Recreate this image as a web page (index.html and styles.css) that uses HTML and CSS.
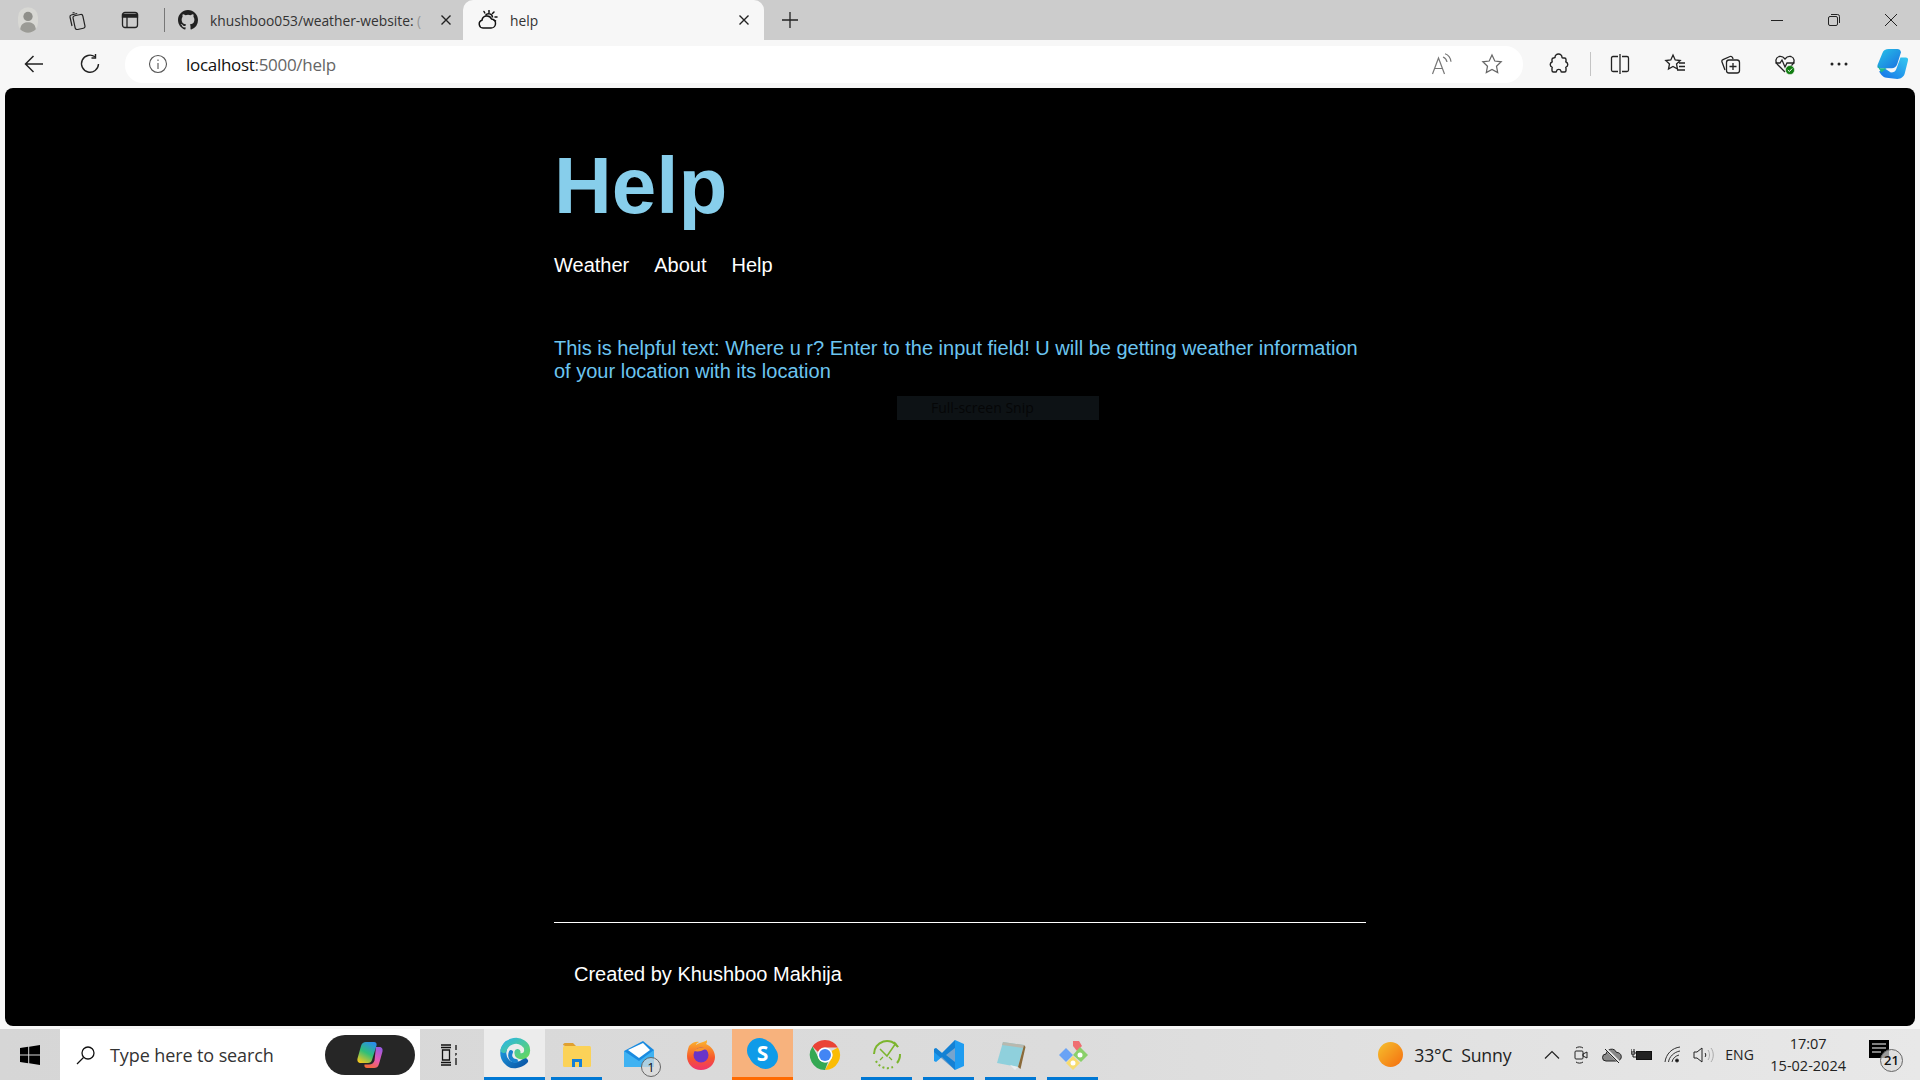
FILE: index.html
```html
<!DOCTYPE html>
<html lang="en">
<head>
  <meta charset="UTF-8">
  <title>help</title>
  <link rel="stylesheet" href="styles.css">
</head>
<body>
  <div class="tabstrip">
    <svg class="avatar" viewBox="0 0 28 36"><rect width="28" height="36" rx="14" fill="#d8d8d4"/><circle cx="14" cy="13" r="6.5" fill="#8f8f8a"/><path d="M3 31c1-8 6-10 11-10s10 2 11 10c-3 3-7 5-11 5s-8-2-11-5z" fill="#9b9b96"/></svg>
    <svg class="tico collections" viewBox="0 0 20 20" fill="none" stroke="#222" stroke-width="1.2"><rect x="7" y="5" width="10" height="14" rx="2" transform="rotate(-12 12 12)"/><path d="M5 16 3 7c-.2-1 .3-1.800 1.200-2l6-1.500M7.500 2.500l-2 .5"/></svg>
    <svg class="tico sidebar" viewBox="0 0 20 20" fill="none" stroke="#222" stroke-width="1.300"><rect x="2.500" y="2.500" width="15" height="15" rx="2.500"/><path d="M2.500 4.500h15v2.500h-15z" fill="#222"/><path d="M7 7v10"/></svg>
    <span class="tabsep"></span>
    <div class="tab">
      <svg class="favicon" viewBox="0 0 16 16"><path fill="#222" d="M8 0C3.580 0 0 3.580 0 8c0 3.540 2.290 6.530 5.470 7.590.4.070.55-.17.55-.38v-1.340c-2.230.49-2.690-1.070-2.690-1.070-.36-.93-.89-1.170-.89-1.170-.73-.5.060-.49.060-.49.800.06 1.220.820 1.220.820.720 1.220 1.870.87 2.330.66.070-.52.280-.87.510-1.070-1.780-.2-3.640-.89-3.640-3.950 0-.87.31-1.590.820-2.150-.08-.2-.36-1.020.08-2.120 0 0 .67-.21 2.200.820a7.700 7.700 0 0 1 4 0c1.530-1.040 2.200-.82 2.200-.82.44 1.100.16 1.920.08 2.120.51.560.82 1.270.82 2.150 0 3.070-1.870 3.750-3.650 3.950.29.250.54.730.54 1.480v2.200c0 .21.15.46.55.38A8 8 0 0 0 16 8c0-4.420-3.580-8-8-8z"/></svg>
      <span class="tabtitle">khushboo053/weather-website: <span class="fade">(</span></span>
      <svg class="tabx" viewBox="0 0 12 12" stroke="#222" stroke-width="1.400"><path d="M1.500 1.500l9 9M10.500 1.500l-9 9"/></svg>
    </div>
    <div class="tab active">
      <svg class="favicon" viewBox="0 0 20 20" fill="none" stroke="#111" stroke-width="1.500"><path d="M5 18a4 4 0 0 1-1-7.800A5 5 0 0 1 13.500 9a4.500 4.500 0 0 1-1 9z"/><path d="M7.500 5.500A3.800 3.800 0 0 1 14.500 7.500"/><path d="M11 .5v2M16 2l-1.500 1.500M19 7h-2M17.500 11l-1.500-.8M6 1.500l.8 1.500" stroke-linecap="round"/></svg>
      <span class="tabtitle">help</span>
      <svg class="tabx" viewBox="0 0 12 12" stroke="#222" stroke-width="1.400"><path d="M1.500 1.500l9 9M10.500 1.500l-9 9"/></svg>
    </div>
    <svg class="newtab" viewBox="0 0 18 18" stroke="#222" stroke-width="1.300"><path d="M9 1v16M1 9h16"/></svg>
    <div class="winctl">
      <svg viewBox="0 0 14 14" stroke="#222"><path d="M1 7.500h12"/></svg>
      <svg viewBox="0 0 14 14" fill="none" stroke="#222"><rect x="1.500" y="3.500" width="9" height="9" rx="1.500"/><path d="M4 1.500h6.500a2 2 0 0 1 2 2V10"/></svg>
      <svg viewBox="0 0 14 14" stroke="#222"><path d="M1 1l12 12M13 1 1 13"/></svg>
    </div>
  </div>

  <div class="toolbar">
    <svg class="tool back" viewBox="0 0 22 22" fill="none" stroke="#222" stroke-width="1.500"><path d="M20 11H2.500M10.500 3l-8 8 8 8"/></svg>
    <svg class="tool reload" viewBox="0 0 22 22" fill="none" stroke="#222" stroke-width="1.400"><path d="M16 3.800A8.500 8.500 0 1 0 19.500 11"/><path d="M16.500 1v4h-4"/></svg>
    <div class="addressbar">
      <svg class="info" viewBox="0 0 20 20" fill="none" stroke="#555" stroke-width="1.100"><circle cx="10" cy="10" r="8.500"/><path d="M10 9v6M10 5.500v1.500"/></svg>
      <span class="url">localhost<span class="urlrest">:5000/help</span></span>
      <svg class="readaloud" viewBox="0 0 22 22" fill="none" stroke="#777" stroke-width="1.200"><path d="M1.500 21 7.500 5l6 16M3.800 15.500h7.500M12 4c2 .8 3.500 2.500 4 5M14 .8c3 1 5.500 4 6 8"/></svg>
      <svg class="staricon" viewBox="0 0 22 22" fill="none" stroke="#666" stroke-width="1.200"><path d="M11 2l2.800 6 6.400.8-4.700 4.400 1.200 6.400-5.700-3.200-5.700 3.200 1.200-6.400L1.800 8.800 8.200 8z"/></svg>
    </div>
    <svg class="tool puzzle" viewBox="0 0 22 22" fill="none" stroke="#222" stroke-width="1.400"><path d="M7 4.500a3.500 3.500 0 0 1 7 0c0 .5 1 .5 1.500.5h1c1 0 1.500.7 1.500 1.500V8c0 .5-.5 1 0 1a2.800 2.800 0 0 1 0 5.200c-.5 0 0 .5 0 1v2.300c0 1-.7 1.500-1.500 1.500H14c-.5 0-1-.3-1-.8a2.300 2.300 0 0 0-4.500 0c0 .5-.5.800-1 .8H5.500C4.500 19 4 18.300 4 17.500v-2.300c0-.5.5-1 0-1a2.800 2.800 0 0 1 0-5.200c.5 0 0-.5 0-1V6.500C4 5.500 4.700 5 5.500 5z"/></svg>
    <span class="toolsep"></span>
    <svg class="tool split" viewBox="0 0 22 22" fill="none" stroke="#222" stroke-width="1.300"><path d="M9 3.500H4C3 3.500 2.500 4 2.500 5v12c0 1 .5 1.500 1.500 1.500h5M13 3.500h5c1 0 1.500.5 1.500 1.500v12c0 1-.5 1.500-1.500 1.500h-5M11 1v20"/></svg>
    <svg class="tool favs" viewBox="0 0 22 22" fill="none" stroke="#222" stroke-width="1.300"><path d="M9 2l2.200 5 5 .6-3.700 3.400 1 5-4.500-2.500L4.500 16l1-5-3.700-3.400 5-.6zM15 10h6M15 13.500h6M13 17h8"/></svg>
    <svg class="tool colls" viewBox="0 0 22 22" fill="none" stroke="#222" stroke-width="1.300"><rect x="7.500" y="7" width="13" height="13" rx="2.500"/><path d="M14 10v7M10.500 13.500h7M6 17 3 9c-.4-1 0-2 1-2.400L11 3.500c1-.4 2 0 2.500 1l.6 1.500"/></svg>
    <svg class="tool health" viewBox="0 0 22 22" fill="none" stroke="#222" stroke-width="1.300"><path d="M11 19 3.500 11.500C1 9 1.500 4.500 5 3.500c2.500-.6 4.500.5 6 2.500 1.500-2 3.500-3.100 6-2.500 3.500 1 4 5.500 1.500 8l-2 2"/><path d="M1.500 10H6l2-3 3 7 2-4h7.500"/><circle cx="16" cy="17" r="4.500" fill="#107c10" stroke="#fff" stroke-width=".5"/><path d="M13.800 17l1.600 1.500 2.800-3" stroke="#fff" stroke-width="1"/></svg>
    <svg class="tool dots" viewBox="0 0 22 22" fill="#222"><circle cx="4" cy="11" r="1.500"/><circle cx="11" cy="11" r="1.500"/><circle cx="18" cy="11" r="1.500"/></svg>
    <svg class="tool copilot" viewBox="0 0 30 30">
      <defs>
        <linearGradient id="cpa" x1="0" y1="0" x2="1" y2="1"><stop offset="0" stop-color="#27c4e8"/><stop offset="1" stop-color="#1a6fe0"/></linearGradient>
        <linearGradient id="cpb" x1="0" y1="1" x2="1" y2="0"><stop offset="0" stop-color="#1570e8"/><stop offset="1" stop-color="#35c8f0"/></linearGradient>
      </defs>
      <path d="M11 1h8c2 0 3 1 3.500 3L19 15c-1 3-3 4-5 4H2c-1.500 0-2-1-1.500-3L5 5c1-3 3-4 6-4z" fill="url(#cpa)"/>
      <path d="M7 19 2 22c2 3 3 5 7 6l10 1c4 0 6-2 7-5l3-12c.5-2-.5-3-2-3h-5l-4 11c-1 2-2 3-5 3z" fill="url(#cpb)"/>
      <path d="M1 16c0 3 2 5 3 7l5-4H3z" fill="#1fb98d"/>
    </svg>
  </div>

  <main class="page">
    <div class="main-content">
      <h1>Help</h1>
      <nav class="nav">
        <a href="#">Weather</a>
        <a href="#">About</a>
        <a href="#">Help</a>
      </nav>
      <p class="helptext">This is helpful text: Where u r? Enter to the input field! U will be getting weather information of your location with its location</p>
      <footer class="footer">Created by Khushboo Makhija</footer>
    </div>
    <div class="snip-hint">Full-screen Snip</div>
  </main>

  <div class="taskbar">
    <div class="startbtn">
      <svg viewBox="0 0 20 20" fill="#000"><path d="M0 3l8.200-1.200v7.700H0zM9.200 1.700 20 0v9.500H9.200zM0 10.500h8.200v7.700L0 17zM9.200 10.500H20V20L9.200 18.300z"/></svg>
    </div>
    <div class="searchbox">
      <svg class="searchicon" viewBox="0 0 20 20" fill="none" stroke="#111" stroke-width="1.300"><circle cx="12" cy="8" r="6"/><path d="M7.500 12.500 1 19"/></svg>
      <span class="searchtext">Type here to search</span>
      <div class="copilotpill">
        <svg viewBox="0 0 26 28">
          <defs>
            <linearGradient id="pa" x1=".7" y1="0" x2=".2" y2="1"><stop offset="0" stop-color="#2a8fe8"/><stop offset=".5" stop-color="#2fbf78"/><stop offset="1" stop-color="#f5c81e"/></linearGradient>
            <linearGradient id="pb" x1=".7" y1="0" x2=".3" y2="1"><stop offset="0" stop-color="#9a5ae0"/><stop offset=".55" stop-color="#e85ab0"/><stop offset="1" stop-color="#f4693a"/></linearGradient>
          </defs>
          <path d="M9 1h8c2 0 3 1.500 2.500 3.500L15 19c-.5 2-2 3-4 3H4c-3 0-4-2-3.500-4.500L4 5C5 2 6.500 1 9 1z" fill="url(#pa)"/>
          <path d="M19 6h3c3 0 4 2 3.500 4.500L22 23c-1 3-2.500 4-5 4H10c-2 0-3-1.500-2.500-3.500H12c3 0 4.500-1.500 5.500-4z" fill="url(#pb)"/>
        </svg>
      </div>
    </div>
    <div class="taskview">
      <svg viewBox="0 0 20 22" fill="none" stroke="#111" stroke-width="1.300"><path d="M1 1h10M1 21h10M2.500 6h7v10h-7zM1 18.500h10M1 3.500h10M16 1v5M16 9v2h.1M16 14v7"/></svg>
    </div>
    <div class="tiles">
      <div class="tile current">
        <svg viewBox="0 0 32 32" fill="none" stroke-linecap="round">
          <defs>
            <linearGradient id="ea" x1="0" y1="0" x2="1" y2="1"><stop offset="0" stop-color="#2eb8dc"/><stop offset="1" stop-color="#62d665"/></linearGradient>
            <linearGradient id="eb" x1="0" y1="0" x2="1" y2="1"><stop offset="0" stop-color="#1e9be0"/><stop offset="1" stop-color="#0b58a8"/></linearGradient>
          </defs>
          <path d="M26 24C21 29 12 30 8 25 3 20 3 12 8 7" stroke="url(#eb)" stroke-width="6"/>
          <path d="M4.500 13C7 5 17 1 24 6c6 4 5 12 0 13-4 1-6-1-5.500-4" stroke="url(#ea)" stroke-width="6"/>
          <path d="M12 15c-2 4 0 9 5 9" stroke="#1780cf" stroke-width="4"/>
        </svg>
      </div>
      <div class="tile running">
        <svg viewBox="0 0 32 32"><path d="M2 6c0-1 1-2 2-2h8l3 3H4z" fill="#e0a030"/><rect x="2" y="7" width="28" height="21" rx="1.500" fill="#fbd258"/><path d="M11 28v-8h10v8h-3v-5h-4v5z" fill="#1480d8"/></svg>
      </div>
      <div class="tile">
        <svg viewBox="0 0 32 32"><path d="M1 12 20 2l11 9v17H1z" fill="#1a8be0"/><path d="M1 12l15 10 15-11v17H1z" fill="#3fb2f2"/><path d="M5 11 20 4l7 7-11 8z" fill="#fff"/></svg>
        <span class="badge">1</span>
      </div>
      <div class="tile">
        <svg viewBox="0 0 32 32">
          <defs><linearGradient id="fa" x1="0" y1="0" x2="0" y2="1"><stop offset="0" stop-color="#fcb82d"/><stop offset=".6" stop-color="#f6582b"/><stop offset="1" stop-color="#f0336e"/></linearGradient></defs>
          <path d="M4 7C7 3 12 2 14 3c-2 1-3 2-3 3 4-3 9-3 11-5 0 2 0 3-1 4 5 2 9 7 9 13 0 7-6 13-14 13S2 25 2 17c0-4 1-7 2-10z" fill="url(#fa)"/>
          <circle cx="16" cy="16" r="7.500" fill="#6a34c8"/>
          <path d="M9 12c3-4 10-5 14-1-3-1-5 0-7 1-2 .5-5 .5-7 0z" fill="#f9952c"/>
        </svg>
      </div>
      <div class="tile skypetile">
        <span class="skype">S</span>
      </div>
      <div class="tile">
        <svg viewBox="0 0 32 32">
          <path d="M16 1a15 15 0 0 1 13 7.500H16a7.500 7.500 0 0 0-7 4.500L3.500 7.500A15 15 0 0 1 16 1z" fill="#ea4335"/>
          <path d="M29 8.500A15 15 0 0 1 16 31l6.500-11.500A7.500 7.500 0 0 0 22.500 12z" fill="#fbbc05"/>
          <path d="M16 31A15 15 0 0 1 3.500 7.500L9.800 19a7.500 7.500 0 0 0 6.200 4.500 7 7 0 0 0 3-.6z" fill="#34a853"/>
          <circle cx="16" cy="16" r="7.500" fill="#fff"/><circle cx="16" cy="16" r="6" fill="#4285f4"/>
        </svg>
      </div>
      <div class="tile running">
        <svg viewBox="0 0 32 32" fill="none" stroke="#7cb52e" stroke-width="2"><path d="M3 15a13 13 0 0 1 24-7M29 15a13 13 0 0 1-3 9"/><path d="M5 22a13 13 0 0 0 17 6" stroke-dasharray="2 2.500"/><path d="M9 10l7 7 9-13M23 3l4 5" stroke-width="1.500"/><path d="M9 21l3-3M21 21l-3-3" stroke-width="1.200"/></svg>
      </div>
      <div class="tile running">
        <svg viewBox="0 0 32 32"><path d="M22 1 9 14 3 9 1 10v12l2 1 6-5 13 13 9-4V5z" fill="#1f9cf0"/><path d="M22 9 13 16l9 7z" fill="#e3e3e3"/><path d="M22 1 9 14 3 9 1 10v3l21 18z" fill="#0a66b8" opacity=".5"/></svg>
      </div>
      <div class="tile running">
        <svg viewBox="0 0 32 32"><path d="M8 3 29 6l-6 22L2 24z" fill="#8fd0dc"/><path d="M8 3 29 6l-1 3L7 6z" fill="#b8b8ae"/><path d="M23 28l6-22 1.500 2-5 22z" fill="#8a6a3a"/><path d="M15 26l8 2-3 3z" fill="#e8eef0"/></svg>
      </div>
      <div class="tile running">
        <svg viewBox="0 0 32 32"><path d="M16 2h6l3 5-5 5-4-5z" fill="#ef6f72"/><path d="M9 9l7 7-7 7-7-7z" fill="#6aa3f5"/><path d="M23 8l8 8-7 7-8-7z" fill="#8ad06a"/><path d="M16 17l7 7-7 7-7-7z" fill="#f7dc6f"/><circle cx="23" cy="16" r="2.500" fill="#fff"/><circle cx="16" cy="24" r="2.500" fill="#fff"/></svg>
      </div>
    </div>

    <div class="tray">
      <span class="sun"></span>
      <span class="weather">33°C&nbsp; Sunny</span>
      <svg class="trayicon chevron" viewBox="0 0 16 16" fill="none" stroke="#222" stroke-width="1.200"><path d="M1 11.500 8 4.500l7 7"/></svg>
      <svg class="trayicon meet" viewBox="0 0 16 20" fill="none" stroke="#222" stroke-width="1"><rect x="2" y="6" width="8" height="8" rx="1"/><path d="M10 9l4-2v6l-4-2zM3 3c2-1.500 5-1.500 7 0M3 17c2 1.500 5 1.500 7 0"/></svg>
      <svg class="trayicon cloud" viewBox="0 0 20 16" fill="#888" stroke="#222" stroke-width="1"><path d="M4 14a3.500 3.500 0 0 1 0-7 5.500 5.500 0 0 1 10.500-1.500A4.200 4.200 0 0 1 15.500 14z"/><path d="M3 1l14 14" stroke="#e6e6e6" stroke-width="2.500"/><path d="M3 2l14 14"/></svg>
      <svg class="trayicon battery" viewBox="0 0 22 14" fill="#111" stroke="#111"><rect x="5.500" y="3.500" width="15" height="8" fill="#222"/><path d="M3 1v3M0 1v3M0 4h4v2H0zM2 6v3h4" fill="none"/></svg>
      <svg class="trayicon wifi" viewBox="0 0 18 18" fill="none" stroke="#333" stroke-width="1"><path d="M1 16C2 8 8 2 16 1M4.500 16C5 11 10 6 16 5M8 16c.5-3 3-6 7-7"/><circle cx="13" cy="14.500" r="1.500" fill="#111"/></svg>
      <svg class="trayicon volume" viewBox="0 0 22 18" fill="none" stroke="#222" stroke-width="1"><path d="M1 6h3l5-4v14l-5-4H1z"/><path d="M12 7c1 1 1 3 0 4"/><path d="M15 4c2 3 2 7 0 10M18 2c3 4 3 10 0 14" stroke="#aaa"/></svg>
      <span class="lang">ENG</span>
      <div class="clock"><span>17:07</span><span>15-02-2024</span></div>
      <div class="notif">
        <svg viewBox="0 0 20 18" fill="#000"><rect width="20" height="18"/><path d="M3 4h14M3 8h14M3 12h9" stroke="#fff" stroke-width="1.200"/></svg>
        <span class="badge wide">21</span>
      </div>
    </div>
  </div>
</body>
</html>
```

FILE: styles.css
```css
* {
  box-sizing: border-box;
}
html, body {
  height: 100%;
}
body {
  margin: 0;
  display: flex;
  flex-direction: column;
  height: 1080px;
  overflow: hidden;
  background: #f7f7f7;
  font-family: "Liberation Sans", Arial, sans-serif;
}

/* browser chrome */
.tabstrip {
  height: 40px;
  flex: none;
  display: flex;
  align-items: center;
  background: #cccccc;
  padding-left: 18px;
}
.avatar {
  width: 20px;
  height: 26px;
}
.tico {
  width: 20px;
  height: 20px;
}
.collections {
  margin-left: 29px;
}
.sidebar {
  margin-left: 33px;
}
.tabsep {
  width: 1px;
  height: 24px;
  background: #777;
  margin-left: 24px;
}
.tab {
  height: 40px;
  display: flex;
  align-items: center;
  width: 298px;
  padding-left: 13px;
  font: 14px "Open Sans", sans-serif;
  color: #333;
}
.tab.active {
  width: 301px;
  background: #f7f7f7;
  border-radius: 10px 10px 0 0;
  padding-left: 15px;
}
.favicon {
  width: 20px;
  height: 20px;
  flex: none;
}
.tabtitle {
  margin-left: 12px;
  width: 225px;
  white-space: nowrap;
  overflow: hidden;
  font-size: 13.800px;
}
.active .tabtitle {
  margin-left: 12px;
  width: 228px;
}
.fade {
  color: #999;
}
.tabx {
  width: 12px;
  height: 12px;
  margin-left: 5px;
  flex: none;
}
.active .tabx {
  margin-left: 0;
}
.newtab {
  width: 18px;
  height: 18px;
  margin-left: 17px;
}
.winctl {
  margin-left: auto;
  display: flex;
  gap: 43px;
  padding-right: 22px;
}
.winctl svg {
  width: 14px;
  height: 14px;
}

.toolbar {
  height: 48px;
  flex: none;
  display: flex;
  align-items: center;
  background: #f7f7f7;
  padding-left: 23px;
}
.tool {
  width: 22px;
  height: 22px;
  flex: none;
}
.reload {
  margin-left: 34px;
}
.addressbar {
  width: 1398px;
  height: 37px;
  margin-left: 24px;
  background: #fff;
  border-radius: 18px;
  display: flex;
  align-items: center;
  padding-left: 23px;
}
.info {
  width: 20px;
  height: 20px;
}
.url {
  margin-left: 18px;
  font: 17px "Open Sans", sans-serif;
  letter-spacing: -0.300px;
  color: #111;
}
.urlrest {
  color: #666;
}
.readaloud {
  width: 22px;
  height: 22px;
  margin-left: auto;
}
.staricon {
  width: 22px;
  height: 22px;
  margin-left: 28px;
  margin-right: 20px;
}
.puzzle {
  margin-left: 25px;
}
.toolsep {
  width: 1px;
  height: 24px;
  background: #c4c4c4;
  margin-left: 20px;
}
.split {
  margin-left: 18px;
}
.favs {
  margin-left: 33px;
}
.colls {
  margin-left: 33px;
}
.health {
  margin-left: 33px;
}
.dots {
  margin-left: 32px;
}
.copilot {
  width: 32px;
  height: 32px;
  margin-left: 27px;
}

/* the page itself */
.page {
  flex: none;
  height: 938px;
  margin: 0 5px;
  background: #000;
  border-radius: 8px;
  position: relative;
}
.main-content {
  width: 812px;
  height: 100%;
  margin: 0 auto;
  display: flex;
  flex-direction: column;
  padding-top: 52px;
}
h1 {
  margin: 0;
  font-size: 80px;
  font-weight: bold;
  color: #87ceeb;
}
.nav {
  display: flex;
  gap: 25px;
  margin-top: 22px;
  font-size: 20px;
}
.nav a {
  color: #fff;
  text-decoration: none;
}
.helptext {
  margin: 60px 0 0;
  font-size: 20px;
  color: #6cc5f0;
}
.footer {
  margin-top: auto;
  border-top: 1px solid #fff;
  padding: 40px 20px;
  font-size: 20px;
  color: #fff;
}
.snip-hint {
  position: absolute;
  left: 892px;
  top: 308px;
  width: 202px;
  height: 24px;
  padding-left: 34px;
  background: #0d1215;
  color: #050607;
  font: 14px/24px "Open Sans", sans-serif;
}

/* windows taskbar */
.taskbar {
  flex: none;
  height: 51px;
  margin-top: 3px;
  display: flex;
  background: linear-gradient(to right, #d6d6d6, #dcdcdc 55%, #e8e8e8);
}
.startbtn {
  width: 60px;
  display: flex;
  align-items: center;
  justify-content: center;
}
.startbtn svg {
  width: 20px;
  height: 20px;
}
.searchbox {
  width: 360px;
  background: #fff;
  display: flex;
  align-items: center;
  padding-left: 16px;
}
.searchicon {
  width: 20px;
  height: 20px;
}
.searchtext {
  margin-left: 14px;
  font: 18px "Open Sans", sans-serif;
  letter-spacing: -0.100px;
  color: #333;
}
.copilotpill {
  margin-left: auto;
  margin-right: 5px;
  width: 90px;
  height: 40px;
  border-radius: 20px;
  background: #262626;
  display: flex;
  align-items: center;
  justify-content: center;
}
.copilotpill svg {
  width: 28px;
  height: 28px;
}
.taskview {
  width: 60px;
  display: flex;
  align-items: center;
  justify-content: center;
}
.taskview svg {
  width: 20px;
  height: 22px;
}
.tiles {
  display: flex;
  gap: 1px;
  margin-left: 4px;
}
.tile {
  width: 61px;
  position: relative;
  display: flex;
  align-items: center;
  justify-content: center;
}
.tile svg {
  width: 32px;
  height: 32px;
}
/* running apps get a short blue bar under the icon */
.tile.running::after {
  content: "";
  position: absolute;
  left: 5px;
  right: 5px;
  bottom: 0;
  height: 3px;
  background: #0078d4;
}
.tile.current {
  background: #ececec;
  border-bottom: 3px solid #0078d4;
}
.skypetile {
  background: #f7b27d;
  border-bottom: 3px solid #ff6a00;
}
.skype {
  width: 27px;
  height: 27px;
  border-radius: 50%;
  background: #0f9be8;
  color: #fff;
  font: bold 21px/27px "Open Sans", sans-serif;
  text-align: center;
  box-shadow: -3px -3px 0 -1px #0f9be8, 3px 3px 0 -1px #0f9be8;
}
.badge {
  position: absolute;
  right: 8px;
  bottom: 3px;
  width: 20px;
  height: 20px;
  border-radius: 50%;
  border: 1px solid #666;
  background: rgba(220, 220, 220, 0.700);
  color: #111;
  font: 13px/18px "Open Sans", sans-serif;
  text-align: center;
}
.tray {
  margin-left: auto;
  display: flex;
  align-items: center;
  padding-right: 19px;
  color: #222;
}
.sun {
  width: 25px;
  height: 25px;
  border-radius: 50%;
  background: linear-gradient(135deg, #f5c12e, #f56d0f);
}
.weather {
  margin-left: 11px;
  font: 17.700px "Open Sans", sans-serif;
  letter-spacing: -0.200px;
}
.trayicon {
  flex: none;
}
.chevron {
  width: 16px;
  height: 16px;
  margin-left: 33px;
}
.meet {
  width: 16px;
  height: 20px;
  margin-left: 13px;
}
.cloud {
  width: 20px;
  height: 16px;
  margin-left: 13px;
}
.battery {
  width: 22px;
  height: 14px;
  margin-left: 9px;
}
.wifi {
  width: 18px;
  height: 18px;
  margin-left: 11px;
}
.volume {
  width: 22px;
  height: 18px;
  margin-left: 11px;
}
.lang {
  margin-left: 10px;
  font: 14px "Open Sans", sans-serif;
}
.clock {
  margin-left: 16.500px;
  display: flex;
  flex-direction: column;
  align-items: center;
  gap: 4px;
  font: 14.500px/18px "Open Sans", sans-serif;
}
.notif {
  position: relative;
  width: 32px;
  height: 30px;
  margin-left: 23px;
}
.notif svg {
  width: 20px;
  height: 18px;
}
.badge.wide {
  right: -2px;
  bottom: -2px;
  width: 23px;
  height: 23px;
  font-weight: 600;
  line-height: 21px;
}
```
